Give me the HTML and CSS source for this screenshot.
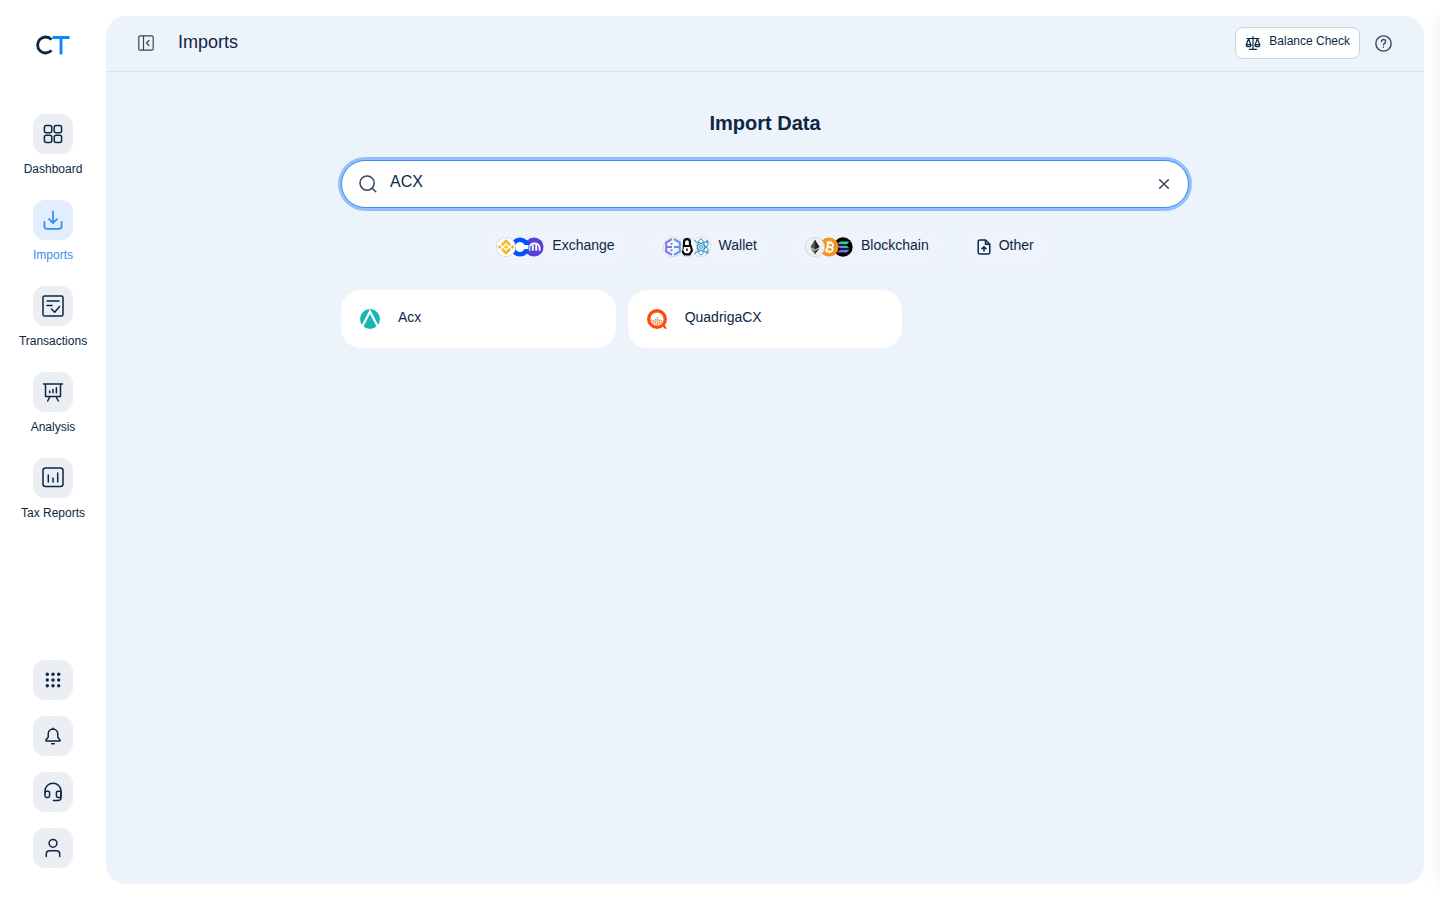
FILE: index.html
```html
<!DOCTYPE html>
<html lang="en">
<head>
    <meta charset="UTF-8">
    <meta name="viewport" content="width=device-width, initial-scale=1.0">
    <title>Imports</title>
    <link rel="stylesheet" href="styles.css">
</head>
<body>
    <aside class="sidebar">
        <a href="#" class="logo" aria-label="Home">
            <svg width="36" height="20" viewBox="0 0 36 20">
                <path d="M16.5 4.6A8 8 0 1 0 16.5 15.4" stroke="#0c2742"/>
                <path d="M17.5 2.5H34.5M26 2.5V19.5" stroke="#0a85ff"/>
            </svg>
        </a>
        <nav class="nav">
            <a href="#" class="nav-item">
                <span class="icon-box">
                    <svg width="20" height="20" viewBox="0 0 20 20">
                        <rect x="1.4" y="1.4" width="7.4" height="7.4" rx="2"/>
                        <rect x="11.2" y="1.4" width="7.4" height="7.4" rx="2"/>
                        <rect x="1.4" y="11.2" width="7.4" height="7.4" rx="2"/>
                        <rect x="11.2" y="11.2" width="7.4" height="7.4" rx="2"/>
                    </svg>
                </span>
                <span>Dashboard</span>
            </a>
            <a href="#" class="nav-item active">
                <span class="icon-box">
                    <svg width="20" height="20" viewBox="0 0 20 20">
                        <path d="M1.4 12V16.3A2.5 2.5 0 0 0 3.9 18.8H16.1A2.5 2.5 0 0 0 18.6 16.3V12M10 1.5V13M6 9.2L10 13.2L14 9.2"/>
                    </svg>
                </span>
                <span>Imports</span>
            </a>
            <a href="#" class="nav-item">
                <span class="icon-box">
                    <svg width="22" height="22" viewBox="0 0 22 22">
                        <rect x="1" y="1" width="20" height="20" rx="1.6"/>
                        <path d="M5 6H17M5 10.5H10M9.5 14L12.7 17.2L17.5 11.5"/>
                    </svg>
                </span>
                <span>Transactions</span>
            </a>
            <a href="#" class="nav-item">
                <span class="icon-box">
                    <svg width="22" height="20" viewBox="0 0 22 20">
                        <path d="M1.5 2H20.5M3.5 2V14.5H18.5V2M8 14.5L5.7 19M14 14.5L16.3 19M7.7 9V10.8M11 7.5V10.8M14.4 5.7V10.8"/>
                    </svg>
                </span>
                <span>Analysis</span>
            </a>
            <a href="#" class="nav-item">
                <span class="icon-box">
                    <svg width="22" height="22" viewBox="0 0 22 22">
                        <rect x="1" y="1" width="20" height="18.5" rx="2.5"/>
                        <path d="M6.3 8V15M11 11V15M15.7 6V15"/>
                    </svg>
                </span>
                <span>Tax Reports</span>
            </a>
        </nav>
        <div class="side-actions">
            <button class="icon-box" aria-label="Apps">
                <svg width="16" height="16" viewBox="0 0 16 16" class="dots">
                    <circle cx="2.3" cy="2.3" r="1.7"/><circle cx="8" cy="2.3" r="1.7"/><circle cx="13.7" cy="2.3" r="1.7"/>
                    <circle cx="2.3" cy="8" r="1.7"/><circle cx="8" cy="8" r="1.7"/><circle cx="13.7" cy="8" r="1.7"/>
                    <circle cx="2.3" cy="13.7" r="1.7"/><circle cx="8" cy="13.7" r="1.7"/><circle cx="13.7" cy="13.7" r="1.7"/>
                </svg>
            </button>
            <button class="icon-box" aria-label="Notifications">
                <svg width="18" height="18" viewBox="0 0 18 18">
                    <path d="M9 1.2V2M9 2A5 5 0 0 0 4.2 7V10.2L2 13V14H16V13L13.8 10.2V7A5 5 0 0 0 9 2ZM7.7 16.7H10.3"/>
                </svg>
            </button>
            <button class="icon-box" aria-label="Support">
                <svg width="20" height="20" viewBox="0 0 20 20">
                    <path d="M2 10.5V9A8 7.7 0 0 1 18 9V15.5A3 3 0 0 1 15 18.5H10.5"/>
                    <rect x="2" y="9.2" width="4.6" height="6.2" rx="1.6"/>
                    <rect x="13.4" y="9.2" width="4.6" height="6.2" rx="1.6"/>
                </svg>
            </button>
            <button class="icon-box" aria-label="Account">
                <svg width="20" height="20" viewBox="0 0 20 20">
                    <circle cx="10" cy="5.3" r="3.9"/>
                    <path d="M3.3 18.5V16A3.3 3.3 0 0 1 6.6 12.7H13.4A3.3 3.3 0 0 1 16.7 16V18.5"/>
                </svg>
            </button>
        </div>
    </aside>

    <main class="main">
        <header class="topbar">
            <button class="plain thin" aria-label="Collapse sidebar">
                <svg width="16" height="16" viewBox="0 0 16 16">
                    <rect x=".8" y=".8" width="14.4" height="14.4" rx="1.5"/>
                    <path d="M5.5 1V15M11 5.5L8.5 8L11 10.5"/>
                </svg>
            </button>
            <h1 class="page-title">Imports</h1>
            <button class="balance thin">
                <svg width="16" height="16" viewBox="0 0 16 16">
                    <path d="M8 1.5V14M4.5 14.3H11.5M2 3.5H14M3.6 3.8L1.4 9.5M3.6 3.8L5.8 9.5M12.4 3.8L10.2 9.5M12.4 3.8L14.6 9.5M1.2 9.7A2.4 2 0 0 0 6 9.7ZM10 9.7A2.4 2 0 0 0 14.8 9.7Z"/>
                </svg>
                <span class="label">Balance Check</span>
            </button>
            <button class="plain" aria-label="Help">
                <svg width="17" height="17" viewBox="0 0 18 18">
                    <circle cx="9" cy="9" r="8.1"/>
                    <path d="M6.8 7A2.2 2.2 0 1 1 10.2 8.8C9.3 9.4 9 9.7 9 10.4M9 12.7V12.9"/>
                </svg>
            </button>
        </header>

        <section class="content">
            <h2 class="heading">Import Data</h2>
            <div class="search">
                <svg width="18" height="18" viewBox="0 0 18 18">
                    <circle cx="8.1" cy="8.1" r="7.1"/>
                    <path d="M13.2 13.2L16.8 16.8"/>
                </svg>
                <input type="text" value="ACX" aria-label="Search imports">
                <button class="plain" aria-label="Clear">
                    <svg width="12" height="12" viewBox="0 0 12 12"><path d="M1.7 1.7L10.3 10.3M10.3 1.7L1.7 10.3"/></svg>
                </button>
            </div>

            <div class="chips">
                <button class="chip">
                    <span class="coins">
                        <svg width="20" height="20" viewBox="0 0 20 20" class="coin">
                            <circle cx="10" cy="10" r="9.6" fill="#fff" stroke="#cdd1d8" stroke-width=".8"/>
                            <g fill="#f3ba2f">
                                <path d="M10 2L15.2 7.2L13.2 9.2L10 6L6.8 9.2L4.8 7.2Z"/>
                                <path d="M10 18L15.2 12.8L13.2 10.8L10 14L6.8 10.8L4.8 12.8Z"/>
                                <path d="M10 7.9L12.1 10L10 12.1L7.9 10Z"/>
                                <path d="M3.5 7.9L5.6 10L3.5 12.1L1.4 10ZM16.5 7.9L18.6 10L16.5 12.1L14.4 10Z"/>
                            </g>
                        </svg>
                        <svg width="20" height="20" viewBox="0 0 20 20" class="coin">
                            <circle cx="10" cy="10" r="9.6" fill="#0052ff"/>
                            <path d="M14.6 8A5 5 0 1 0 14.6 12H18.5V8Z" fill="#fff"/>
                        </svg>
                        <svg width="20" height="20" viewBox="0 0 20 20" class="coin">
                            <circle cx="10" cy="10" r="9.6" fill="#5741d9"/>
                            <path d="M5.4 13.7V10.8A5.1 4.3 0 0 1 15.6 10.8V13.7" stroke="#fff" stroke-width="1.9"/>
                            <path d="M8.8 13.7V8M12.2 13.7V8" stroke="#fff" stroke-width="1.9"/>
                        </svg>
                    </span>
                    <span class="label">Exchange</span>
                </button>
                <button class="chip">
                    <span class="coins">
                        <svg width="20" height="20" viewBox="0 0 20 20" class="coin">
                            <circle cx="10" cy="10" r="9.6" fill="#f4f5fd" stroke="#cdd1d8" stroke-width=".8"/>
                            <path d="M9 2.2L3.2 5.6V14.4L9 17.8M3.2 10H9" stroke="#8c6cef" stroke-width="2"/>
                            <path d="M11 2.2L16.8 5.6V14.4L11 17.8M11 10H16.8M7.5 6.8H9.5M7.5 13.2H9.5" stroke="#5c91f2" stroke-width="2"/>
                        </svg>
                        <svg width="20" height="20" viewBox="0 0 20 20" class="coin">
                            <circle cx="10" cy="10" r="9.6" fill="#fff" stroke="#cdd1d8" stroke-width=".8"/>
                            <path d="M7 9V5.2A3 3 0 0 1 13 5.2V9M6.2 9H13.8L15 13.5L12.5 17.3H7.5L5 13.5Z" stroke="#050505" stroke-width="2.2"/>
                            <path d="M10 11.5V14" stroke="#050505" stroke-width="1.4"/>
                        </svg>
                        <svg width="20" height="20" viewBox="0 0 20 20" class="coin">
                            <circle cx="10" cy="10" r="9.6" fill="#fff" stroke="#cdd1d8" stroke-width=".8"/>
                            <g stroke="#2791c4" stroke-width="1">
                                <ellipse cx="10" cy="10" rx="8" ry="3.3" transform="rotate(30 10 10)"/>
                                <ellipse cx="10" cy="10" rx="8" ry="3.3" transform="rotate(90 10 10)"/>
                                <ellipse cx="10" cy="10" rx="8" ry="3.3" transform="rotate(150 10 10)"/>
                                <circle cx="10" cy="10" r="1.5"/>
                                <circle cx="4" cy="4.5" r="1"/><circle cx="16" cy="4.5" r="1"/>
                                <circle cx="4" cy="15.5" r="1"/><circle cx="16" cy="15.5" r="1"/>
                            </g>
                        </svg>
                    </span>
                    <span class="label">Wallet</span>
                </button>
                <button class="chip">
                    <span class="coins">
                        <svg width="20" height="20" viewBox="0 0 20 20" class="coin">
                            <circle cx="10" cy="10" r="9.6" fill="#f1f1f1" stroke="#cdd1d8" stroke-width=".8"/>
                            <path d="M10 2.5L5.4 10.1L10 12.7Z" fill="#555"/>
                            <path d="M10 2.5L14.6 10.1L10 12.7Z" fill="#222"/>
                            <path d="M5.4 11.1L10 13.8V17.5Z" fill="#666"/>
                            <path d="M14.6 11.1L10 13.8V17.5Z" fill="#333"/>
                        </svg>
                        <svg width="20" height="20" viewBox="0 0 20 20" class="coin">
                            <circle cx="10" cy="10" r="9.6" fill="#f7931a"/>
                            <g transform="rotate(12 10 10)" stroke="#fff" stroke-width="1.8">
                                <path d="M6.7 5.8H11.5A2 2 0 0 1 11.5 9.9H8.5M8.5 9.9H12A2.1 2.1 0 0 1 12 14.2H6.7M8.5 5.8V14.2"/>
                                <path d="M9.3 3.8V5.8M11.5 3.8V5.8M9.3 14.2V16.2M11.5 14.2V16.2" stroke-width="1.2"/>
                            </g>
                        </svg>
                        <svg width="20" height="20" viewBox="0 0 20 20" class="coin">
                            <defs>
                                <linearGradient id="sol" gradientUnits="userSpaceOnUse" x1="6" y1="16" x2="14" y2="4">
                                    <stop offset="0" stop-color="#9945ff"/>
                                    <stop offset="1" stop-color="#14f195"/>
                                </linearGradient>
                            </defs>
                            <circle cx="10" cy="10" r="9.7" fill="#000"/>
                            <path d="M6.8 4.6H16.2L13.9 7.2H4.5ZM4.5 8.7H13.9L16.2 11.3H6.8ZM6.8 12.8H16.2L13.9 15.4H4.5Z" fill="url(#sol)"/>
                        </svg>
                    </span>
                    <span class="label">Blockchain</span>
                </button>
                <button class="chip">
                    <svg width="14" height="16" viewBox="0 0 14 16">
                        <path d="M8.5 1H3A1.8 1.8 0 0 0 1.2 2.8V13.2A1.8 1.8 0 0 0 3 15H11A1.8 1.8 0 0 0 12.8 13.2V5.2ZM8.5 1V5.2H12.8M7 12V8M5 9.7L7 7.7L9 9.7"/>
                    </svg>
                    <span class="label">Other</span>
                </button>
            </div>

            <div class="results">
                <button class="card">
                    <svg width="22" height="22" viewBox="0 0 22 22" class="coin">
                        <circle cx="11" cy="11" r="10" fill="#16b6b8"/>
                        <path d="M2.8 19.5L11 3.5L19.2 19.5" stroke="#fff" stroke-width="2.2"/>
                    </svg>
                    <span class="label">Acx</span>
                </button>
                <button class="card">
                    <svg width="22" height="22" viewBox="0 0 22 22" class="coin">
                        <circle cx="11" cy="11" r="8.3" stroke="#ff4b0a" stroke-width="3.4"/>
                        <path d="M15.5 17L17.5 15L21 20.8H18.8Z" fill="#ff4b0a"/>
                        <path d="M5.5 11.5V14M7.5 12V15.5M9.5 11V16.5M11.5 9V17M13.5 11.5V16.5M15.5 12V15" stroke="#ff8a5c" stroke-width="1.5" stroke-dasharray="1.5 .4"/>
                    </svg>
                    <span class="label">QuadrigaCX</span>
                </button>
            </div>
        </section>
    </main>

    <div class="drawer"></div>
</body>
</html>
```
FILE: styles.css
```css
*{
    box-sizing: border-box;
}
body{
    margin: 0;
    min-height: 100vh;
    display: flex;
    overflow: hidden;
    background-color: #fff;
    color: #0c2742;
    font-family: "Liberation Sans", Arial, sans-serif;
    font-size: 14px;
}
button{
    font: inherit;
    color: inherit;
    border: none;
    padding: 0;
    background: none;
    cursor: pointer;
}
svg{
    display: block;
    flex-shrink: 0;
    fill: none;
    stroke: currentColor;
    stroke-width: 1.5;
    stroke-linecap: round;
    stroke-linejoin: round;
}
.thin svg{
    stroke-width: 1.2;
}
.logo svg{
    stroke-width: 2.8;
    stroke-linecap: butt;
}
.coin{
    stroke: none;
    stroke-linecap: butt;
    stroke-linejoin: miter;
}
.sidebar{
    width: 106px;
    flex-shrink: 0;
    padding: 35px 0 32px;
    display: flex;
    flex-direction: column;
    align-items: center;
}
.logo{
    margin-bottom: 59px;
}
.nav{
    display: flex;
    flex-direction: column;
    gap: 24px;
}
.nav-item{
    display: flex;
    flex-direction: column;
    align-items: center;
    gap: 8px;
    color: #0c2742;
    font-size: 12px;
    line-height: 14px;
    text-decoration: none;
}
.icon-box{
    width: 40px;
    height: 40px;
    border-radius: 12px;
    background-color: #ebeff4;
    display: flex;
    align-items: center;
    justify-content: center;
}
.active{
    color: #398cf0;
}
.active .icon-box{
    background-color: #e2edfe;
}
.active svg{
    stroke-width: 1.8;
}
.side-actions{
    margin-top: auto;
    display: flex;
    flex-direction: column;
    gap: 16px;
}
.dots{
    fill: currentColor;
    stroke: none;
}
.main{
    flex: 1;
    margin: 16px 16px 16px 0;
    border-radius: 20px;
    background-color: #ecf3fb;
}
.topbar{
    height: 56px;
    padding: 0 32px 1px;
    display: flex;
    align-items: center;
    border-bottom: 1px solid #d9e2ec;
}
.plain{
    color: #37475a;
}
.page-title{
    margin: 0 auto 0 24px;
    padding-bottom: 2px;
    font-size: 18px;
    font-weight: normal;
}
.label{
    padding-bottom: 4px;
}
.balance{
    height: 32px;
    margin-right: 15px;
    padding: 0 9px;
    display: flex;
    align-items: center;
    gap: 8px;
    border: 1px solid #ccd3dc;
    border-radius: 8px;
    background-color: #fff;
    font-size: 12px;
}
.content{
    max-width: 848px;
    margin: 0 auto;
    padding-top: 39px;
}
.heading{
    margin: 0 0 25px;
    font-size: 20px;
    line-height: 24px;
    text-align: center;
}
.search{
    height: 48px;
    padding: 0 18px 0 17px;
    display: flex;
    align-items: center;
    gap: 13px;
    border: 1px solid #398cf0;
    border-radius: 24px;
    background-color: #fff;
    box-shadow: 0 0 0 3px #93c0f8;
    color: #37475a;
}
.search input{
    flex: 1;
    border: none;
    outline: none;
    padding: 0 0 4px;
    background: none;
    color: #0c2742;
    font-family: inherit;
    font-size: 16px;
}
.chips{
    margin: 21px 0 25px;
    display: flex;
    justify-content: center;
    gap: 16px;
}
.chip{
    height: 36px;
    padding: 0 16px;
    display: flex;
    align-items: center;
    gap: 8px;
    border-radius: 18px;
    background-color: #eff3fc;
}
.coins{
    display: flex;
    isolation: isolate;
}
.coins .coin{
    position: relative;
}
.coins .coin + .coin{
    margin-left: -6px;
}
/* first coin lies on top of the next ones */
.coins .coin:nth-child(1){
    z-index: 3;
}
.coins .coin:nth-child(2){
    z-index: 2;
}
.results{
    display: grid;
    grid-template-columns: repeat(3, 1fr);
    gap: 12px;
}
.card{
    height: 58px;
    padding: 0 18px;
    display: flex;
    align-items: center;
    gap: 17px;
    border-radius: 20px;
    background-color: #fff;
}
/* closed side panel, only its shadow shows */
.drawer{
    position: fixed;
    top: 16px;
    bottom: 16px;
    left: 100%;
    width: 400px;
    box-shadow: 0 0 16px rgba(0,0,0,0.07);
}
```
